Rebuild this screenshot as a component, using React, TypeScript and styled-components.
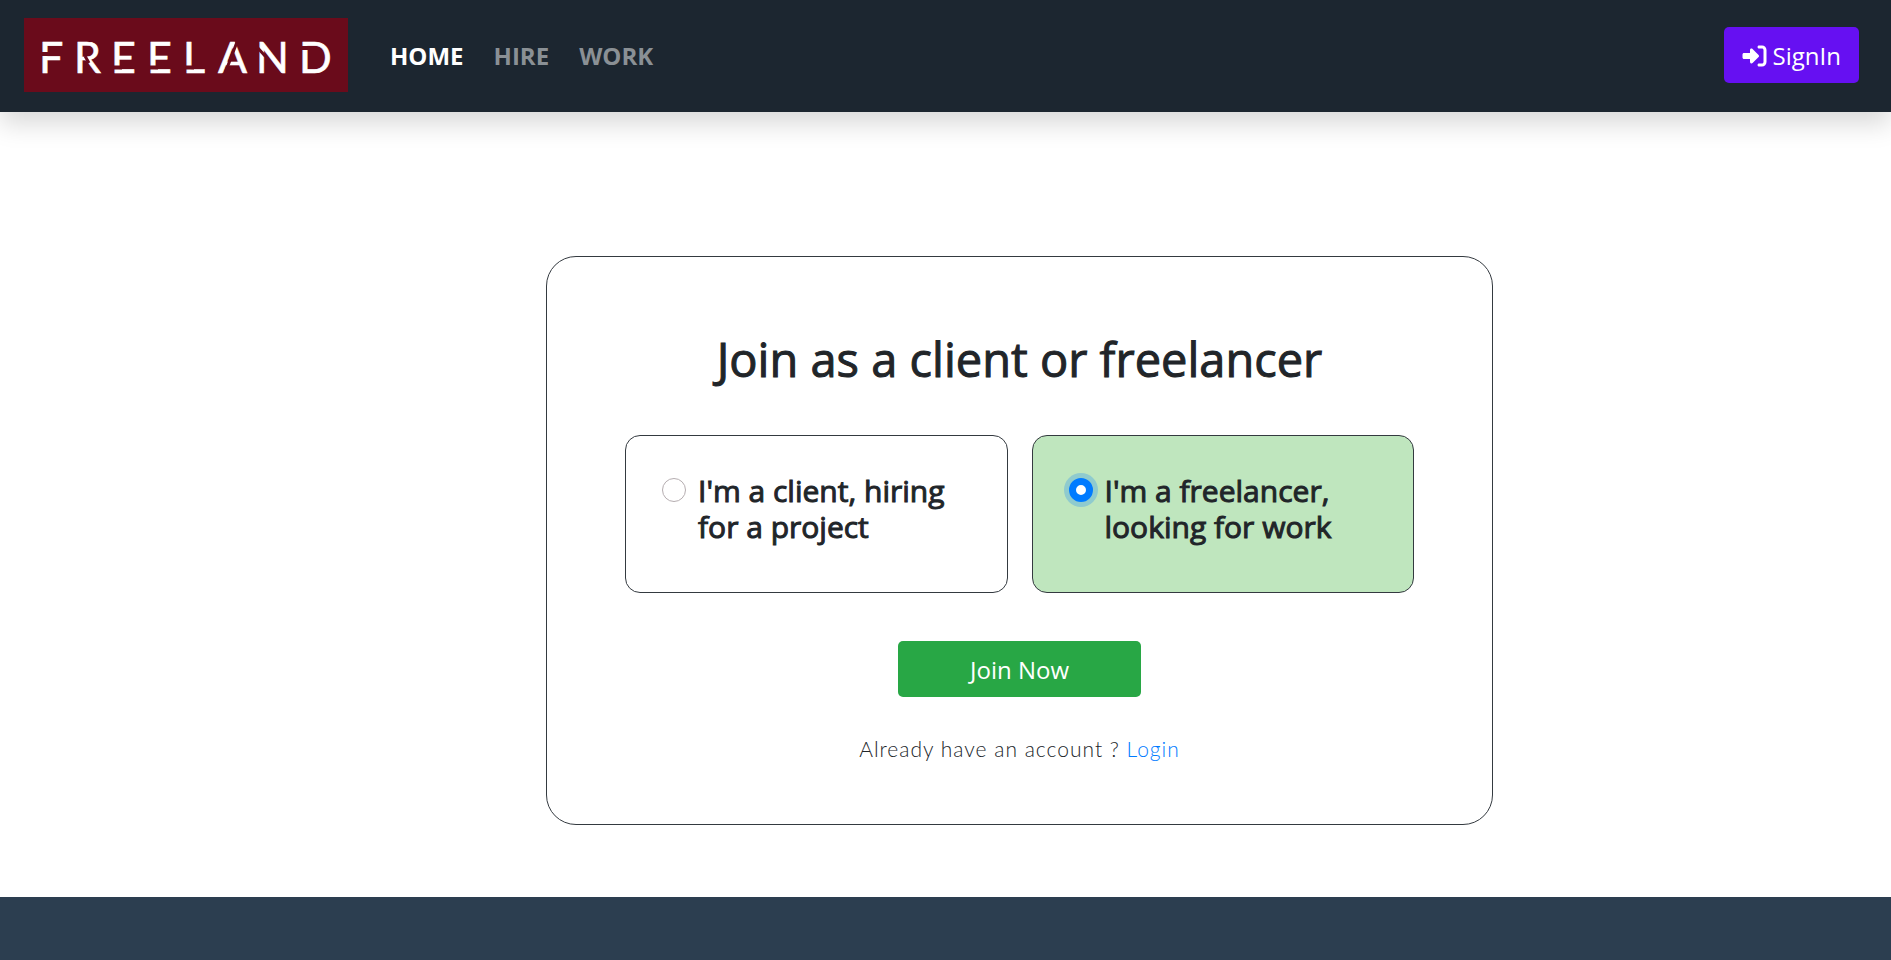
import React, { useState } from "react";
import styled, { createGlobalStyle } from "styled-components";

const uiFont = `"Open Sans", "Noto Sans", sans-serif`;

const GlobalStyle = createGlobalStyle`
  *, *::before, *::after { box-sizing: border-box; }
  html { background: #2c3e50; }
  body { margin: 0; background: #fff; color: #212529; font-family: ${uiFont}; }
`;

const Header = styled.header`
  display: flex;
  align-items: center;
  padding: 18px 32px 20px 24px;
  background: #1c2630;
  box-shadow: 0 12px 24px rgba(0, 0, 0, 0.15);
`;

const Brand = styled.a`
  display: block;
  height: 74px;
  margin-right: 27px;
`;

const Nav = styled.nav`
  display: flex;
  flex: 1;
`;

const NavLink = styled.a<{ $active?: boolean }>`
  padding: 10px 15px 8px;
  color: ${(p) => (p.$active ? "#fff" : "#8a9095")};
  font-size: 24px;
  font-weight: 700;
  line-height: 36px;
  text-decoration: none;
`;

const Button = styled.button<{ $tone: string }>`
  display: inline-flex;
  align-items: center;
  justify-content: center;
  gap: 6px;
  height: 56px;
  padding: 2px 18px 0;
  border: 0;
  border-radius: 5px;
  background: ${(p) => p.$tone};
  color: #fff;
  font-family: ${uiFont};
  font-size: 24px;
  line-height: 36px;
  cursor: pointer;
`;

const JoinButton = styled(Button)`
  width: 243px;
  margin-top: 48px;
`;

const Main = styled.main`
  padding: 144px 398px 72px 546px;
`;

const Card = styled.form`
  display: flex;
  flex-direction: column;
  align-items: center;
  padding: 73px 78px 60px;
  border: 1px solid #343a40;
  border-radius: 30px;
`;

const Title = styled.h1`
  margin: 0 0 47px;
  font-size: 47px;
  font-weight: 500;
  line-height: 58px;
  white-space: nowrap;
  -webkit-text-stroke: 1px currentColor;
`;

const Options = styled.div`
  display: grid;
  grid-template-columns: 1fr 1fr;
  gap: 24px;
  width: 100%;
`;

const Option = styled.label<{ $selected: boolean }>`
  display: flex;
  align-items: flex-start;
  gap: 12px;
  height: 158px;
  padding: 37px 36px 36px;
  border: 1px solid #343a40;
  border-radius: 15px;
  background: ${(p) => (p.$selected ? "#bfe6be" : "#fff")};
  cursor: pointer;
`;

const Radio = styled.input`
  appearance: none;
  flex: none;
  width: 24px;
  height: 24px;
  margin: 5px 0 0;
  border: 1px solid #b5adb0;
  border-radius: 50%;
  background: #fff;

  &:checked {
    border: 7px solid #007bff;
    box-shadow: 0 0 0 5px rgba(0, 123, 255, 0.25);
  }
`;

const OptionText = styled.span`
  font-size: 30px;
  font-weight: 500;
  line-height: 36px;
  white-space: pre-line;
  -webkit-text-stroke: 1px currentColor;
`;

const LoginLine = styled.p`
  margin: 36px 0 0;
  font-family: Lato, sans-serif;
  font-size: 21px;
  font-weight: 300;
  line-height: 31px;
  letter-spacing: 1px;
`;

const LoginLink = styled.a`
  color: #007bff;
  text-decoration: none;
`;

const Footer = styled.footer`
  height: 63px;
  background: #2c3e50;
`;

const Logo = () => (
  <svg width="324" height="74" viewBox="0 0 324 74" role="img" aria-label="Freeland">
    <rect width="324" height="74" fill="#6a0b1b" />
    <text
      x="15 50 87 123 159 194 232 275"
      y="55"
      fill="#fff"
      stroke="#fff"
      strokeWidth="0.6"
      fontFamily="Lato, sans-serif"
      fontSize="43"
    >
      FREELAND
    </text>
    <g stroke="#6a0b1b" strokeWidth="4" fill="none">
      <path d="M16 36h8M88 49.500h10M124 49.500h10M160 49.500h10M276 30h8" />
      <path d="M61 38l4 7M201.500 54L213 24M232.500 28.500l9 10" strokeWidth="3" />
    </g>
  </svg>
);

const SignInIcon = () => (
  <svg width="25" height="24" viewBox="0 0 512 512" fill="#fff" aria-hidden="true">
    <path d="M352 96l64 0c17.700 0 32 14.300 32 32l0 256c0 17.700-14.300 32-32 32l-64 0c-17.700 0-32 14.300-32 32s14.300 32 32 32l64 0c53 0 96-43 96-96l0-256c0-53-43-96-96-96l-64 0c-17.700 0-32 14.300-32 32s14.300 32 32 32zm-9.400 182.600c12.500-12.500 12.500-32.800 0-45.300l-128-128c-9.200-9.200-22.900-11.900-34.900-6.900S160 115.100 160 128l0 64-128 0c-17.700 0-32 14.300-32 32l0 64c0 17.700 14.300 32 32 32l128 0 0 64c0 12.900 7.800 24.600 19.800 29.600s25.700 2.200 34.900-6.900l128-128z" />
  </svg>
);

const navItems = ["HOME", "HIRE", "WORK"];
const roles = [
  { id: "client", text: "I'm a client, hiring\nfor a project" },
  { id: "freelancer", text: "I'm a freelancer,\nlooking for work" },
];

export default function App() {
  const [role, setRole] = useState("freelancer");
  return (
    <>
      <GlobalStyle />
      <Header>
        <Brand href="#">
          <Logo />
        </Brand>
        <Nav>
          {navItems.map((item, i) => (
            <NavLink key={item} href="#" $active={i === 0}>
              {item}
            </NavLink>
          ))}
        </Nav>
        <Button type="button" $tone="#6610f2">
          <SignInIcon />
          SignIn
        </Button>
      </Header>
      <Main>
        <Card onSubmit={(e) => e.preventDefault()}>
          <Title>Join as a client or freelancer</Title>
          <Options>
            {roles.map((r) => (
              <Option key={r.id} htmlFor={r.id} $selected={role === r.id}>
                <Radio
                  type="radio"
                  name="role"
                  id={r.id}
                  checked={role === r.id}
                  onChange={() => setRole(r.id)}
                />
                <OptionText>{r.text}</OptionText>
              </Option>
            ))}
          </Options>
          <JoinButton type="submit" $tone="#28a745">
            Join Now
          </JoinButton>
          <LoginLine>
            Already have an account ? <LoginLink href="#">Login</LoginLink>
          </LoginLine>
        </Card>
      </Main>
      <Footer />
    </>
  );
}
